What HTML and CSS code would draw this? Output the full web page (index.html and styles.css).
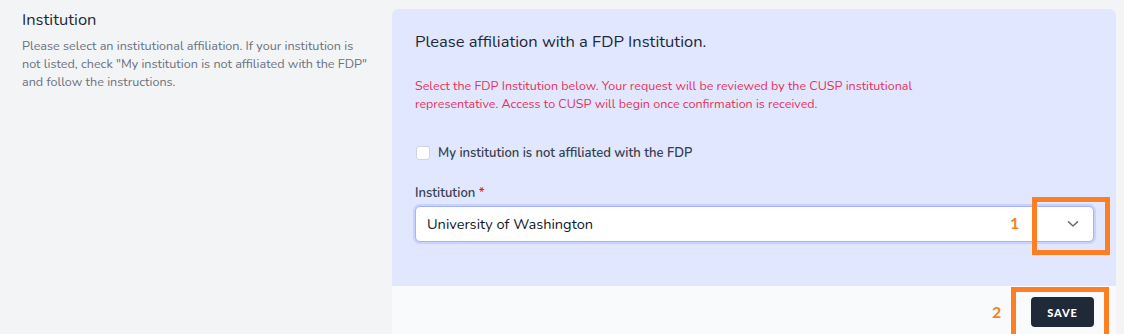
FILE: index.html
```html
<!DOCTYPE html>
<html lang="en">
<head>
<meta charset="utf-8">
<title>Institution</title>
<link rel="stylesheet" href="styles.css">
</head>
<body>
<div class="page">
  <aside class="intro">
    <h2 class="intro-title">Institution</h2>
    <p class="intro-text">Please select an institutional affiliation. If your institution is not listed, check "My institution is not affiliated with the FDP" and follow the instructions.</p>
  </aside>
  <section class="card">
    <div class="card-body">
      <h3 class="card-title">Please affiliation with a FDP Institution.</h3>
      <p class="notice">Select the FDP Institution below. Your request will be reviewed by the CUSP institutional<br>representative. Access to CUSP will begin once confirmation is received.</p>
      <label class="check-row"><span class="checkbox"></span><span>My institution is not affiliated with the FDP</span></label>
      <div class="field">
        <div class="field-label">Institution <span class="req">*</span></div>
        <div class="select">
          <span class="select-value">University of Washington</span>
          <svg class="chevron" width="12" height="8" viewBox="0 0 12 8"><path d="M1.5 1.8 L6 6 L10.5 1.8" fill="none" stroke="#6b7280" stroke-width="1.6" stroke-linecap="round" stroke-linejoin="round"/></svg>
          <span class="mark mark-1"></span>
          <span class="mark-num num-1">1</span>
        </div>
      </div>
    </div>
    <div class="card-footer">
      <div class="save-wrap">
        <button class="save">SAVE</button>
        <span class="mark mark-2"></span>
        <span class="mark-num num-2">2</span>
      </div>
    </div>
  </section>
</div>
</body>
</html>
```

FILE: styles.css
```css
* { box-sizing: border-box; }
html, body { margin: 0; padding: 0; }
body {
  background: #f3f4f6;
  font-family: "Nunito", "Lato", "Noto Sans", sans-serif;
  color: #1f2937;
  height: 334px;
  overflow: hidden;
}
.page {
  display: flex;
  gap: 24px;
  padding: 9px 8px 0 22px;
}
.intro {
  width: 346px;
  flex: none;
}
.intro-title {
  margin: -1px 0 5px 0;
  font-size: 16.5px;
  line-height: 24px;
  font-weight: 400;
  color: #1f2937;
}
.intro-text {
  margin: 0;
  font-size: 12.6px;
  line-height: 18px;
  color: #6b7280;
}
.card {
  flex: 1;
}
.card-body {
  background: #e0e7ff;
  border-radius: 7px 7px 0 0;
  padding: 21px 22px 44px 23px;
  height: 277px;
}
.card-title {
  margin: 0;
  font-size: 16.5px;
  line-height: 24px;
  font-weight: 400;
  color: #1f2937;
}
.notice {
  margin: 23px 0 0 0;
  font-size: 12.5px;
  line-height: 17.5px;
  color: #e8315a;
}
.check-row {
  display: flex;
  align-items: center;
  gap: 8px;
  margin-top: 32px;
  font-size: 13px;
  line-height: 18px;
  font-weight: 600;
  color: #374151;
}
.checkbox {
  width: 14px;
  height: 14px;
  margin-left: 1px;
  background: #fff;
  border: 1px solid #d1d5db;
  border-radius: 3px;
}
.field { margin-top: 22px; }
.field-label {
  font-size: 13px;
  line-height: 18px;
  font-weight: 600;
  color: #374151;
  margin-bottom: 4px;
}
.req { color: #dc2626; }
.select {
  position: relative;
  display: flex;
  align-items: center;
  justify-content: space-between;
  height: 36px;
  background: #fff;
  border: 1px solid #a5b4fc;
  border-radius: 5px;
  box-shadow: 0 0 0 2px #c7d2fe;
  padding: 0 14px 0 11px;
}
.select-value {
  font-size: 14.6px;
  color: #111827;
}
.chevron { display: block; }
.card-footer {
  background: #f9fafb;
  height: 60px;
  padding: 11px 22px 0 0;
  display: flex;
  justify-content: flex-end;
}
.save-wrap { position: relative; }
.save {
  width: 63px;
  height: 30px;
  border: 0;
  border-radius: 4px;
  background: #1f2937;
  color: #fff;
  font-family: "Lato", "Noto Sans", sans-serif;
  font-weight: 900;
  font-size: 11px;
  letter-spacing: 0.9px;
  padding: 0;
}
.mark {
  position: absolute;
  border: 5px solid #fd7e23;
}
.mark-1 {
  left: 616px;
  top: -10px;
  width: 78px;
  height: 58px;
}
.mark-2 {
  left: -20px;
  top: -10px;
  width: 98px;
  height: 50px;
  border-bottom: 0;
}
.mark-num {
  position: absolute;
  color: #fd7e23;
  font-family: "Lato", sans-serif;
  font-weight: 700;
  font-size: 16px;
  line-height: 20px;
}
.num-1 { left: 594px; top: 6px; }
.num-2 { left: -39px; top: 5px; }
```
